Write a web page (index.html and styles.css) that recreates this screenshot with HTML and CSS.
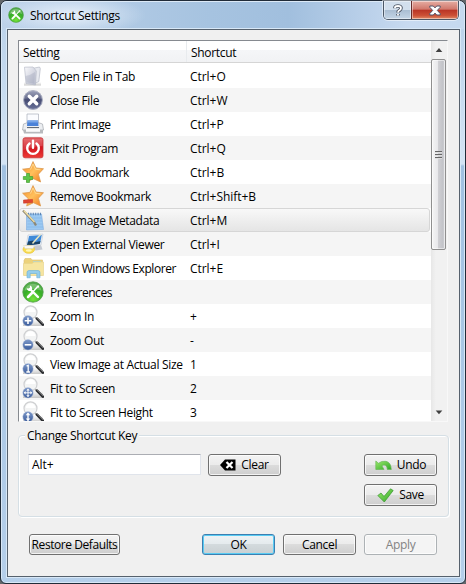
FILE: index.html
```
<!DOCTYPE html>
<html lang="en">
<head>
<meta charset="utf-8">
<title>Shortcut Settings</title>
<link rel="stylesheet" href="styles.css">
</head>
<body>
<svg class="defs" width="0" height="0" aria-hidden="true">
  <defs>
    <linearGradient id="gold" x1="0" y1="0" x2="1" y2="1"><stop offset="0" stop-color="#f58a2a"/><stop offset=".5" stop-color="#ffc05c"/><stop offset="1" stop-color="#f2761c"/></linearGradient>
    <linearGradient id="silver" x1="0" y1="0" x2="1" y2="1"><stop offset="0" stop-color="#fafafc"/><stop offset="1" stop-color="#b4b8ca"/></linearGradient>
    <linearGradient id="red" x1="0" y1="0" x2="0" y2="1"><stop offset="0" stop-color="#e25458"/><stop offset=".5" stop-color="#d31620"/><stop offset="1" stop-color="#ee3a35"/></linearGradient>
    <radialGradient id="green" cx=".5" cy=".85" r=".8"><stop offset="0" stop-color="#74e23a"/><stop offset=".6" stop-color="#37ae27"/><stop offset="1" stop-color="#54a84c"/></radialGradient>
    <linearGradient id="navy" x1="0" y1="0" x2="0" y2="1"><stop offset="0" stop-color="#8c92ae"/><stop offset=".5" stop-color="#474d74"/><stop offset="1" stop-color="#6a729a"/></linearGradient>
    <linearGradient id="blue" x1="0" y1="0" x2="0" y2="1"><stop offset="0" stop-color="#7d98c8"/><stop offset="1" stop-color="#3a5c9c"/></linearGradient>
    <linearGradient id="leaf" x1="0" y1="0" x2="1" y2="1"><stop offset="0" stop-color="#9bea6c"/><stop offset="1" stop-color="#2ea626"/></linearGradient>
    <linearGradient id="floor" x1="0" y1="0" x2="0" y2="1"><stop offset="0" stop-color="#ccc" stop-opacity="0"/><stop offset="1" stop-color="#b4b4b4" stop-opacity=".75"/></linearGradient>
    <symbol id="i-folder" viewBox="0 0 22 22">
      <path d="M2 17h17v3.500H2z" fill="url(#floor)"/>
      <path d="M10 3.500L17.500 2l.8 1.500-1.500 13-5.300 2.500z" fill="#e8eaf0" stroke="#b5b9c6" stroke-width=".7"/>
      <path d="M2.500 2.200L11 2l3.300 4-.8 14L4 18.500z" fill="url(#silver)" stroke="#b8bbc8" stroke-width=".7"/>
      <path d="M3.500 11Q9 10 13 7l-.8 11.500L4.500 17.500z" fill="#9ea3b8" opacity=".35"/>
    </symbol>
    <symbol id="i-close" viewBox="0 0 22 22">
      <circle cx="11" cy="11" r="9.400" fill="url(#navy)" stroke="#a9adc0" stroke-width="1"/>
      <path d="M2.500 10a8.500 8.500 0 0 1 17 0q-8-3-17 0z" fill="#fff" opacity=".14"/>
      <path d="M7.300 7.300l7.400 7.400m0-7.400l-7.400 7.400" stroke="#fff" stroke-width="3.400" stroke-linecap="round"/>
    </symbol>
    <symbol id="i-print" viewBox="0 0 22 22">
      <path d="M5 1h11.500v11H5z" fill="#fbfcff" stroke="#aaafba" stroke-width=".7"/>
      <path d="M1.500 11l3-1h13l3 1 1 6H.5z" fill="#eceef1" stroke="#a3a7af" stroke-width=".7"/>
      <path d="M5.500 7.500h10.500l.5 5.500H5z" fill="#4b82d8"/><path d="M5.500 7.500h10.500v2H5.500z" fill="#7aa7e8"/><path d="M5 14h12v1.200H5z" fill="#646c78"/>
      <path d="M1 17h20v3.500H2z" fill="#b8babd"/><path d="M4 15.500h14v3.300H4z" fill="#fafafa"/>
    </symbol>
    <symbol id="i-power" viewBox="0 0 22 22">
      <rect x="1" y=".8" width="20" height="20" rx="2" fill="url(#red)" stroke="#c63236" stroke-width=".8"/>
      <path d="M1.500 1.500h19V9Q12 9 1.500 13z" fill="#fff" opacity=".15"/>
      <path d="M7.500 6.500a5.800 5.800 0 1 0 7 0" fill="none" stroke="#fff" stroke-width="2.400" stroke-linecap="round"/>
      <path d="M11 3.800v7" stroke="#fff" stroke-width="2.400" stroke-linecap="round"/>
    </symbol>
    <symbol id="i-star" viewBox="0 0 22 22">
      <path d="M11 .6l3 6.400 7.500.7-5.100 5.500 2.200 7.800-7.100-3.300L4.700 21l1.500-7.500L.6 8.200 8 7.300z" fill="url(#gold)" stroke="#dc9a50" stroke-width=".8" stroke-linejoin="round"/>
      <path d="M8.500 8.500L11 3l2.500 5.200 5 .7" fill="none" stroke="#ffdc96" stroke-width=".9"/>
    </symbol>
    <symbol id="i-add" viewBox="0 0 22 22"><use href="#i-star"/><path d="M4.500 12.500h3v3h3.200v3H7.500v3h-3v-3H1.300v-3h3.200z" fill="#5cc648" stroke="#38982c" stroke-width=".6"/></symbol>
    <symbol id="i-remove" viewBox="0 0 22 22"><use href="#i-star"/><path d="M1.500 15l9-.6v3.200l-9 .6z" fill="#e04431" stroke="#bd3020" stroke-width=".5"/></symbol>
    <symbol id="i-edit" viewBox="0 0 22 22">
      <path d="M4.500 5h15l2 15.500-17 .5z" fill="#9cc9f2" stroke="#7eace0" stroke-width=".6"/>
      <path d="M5 9h14.500M5.500 12h14.500M5.500 15h15M5 18h16" stroke="#84b4e6" stroke-width=".7"/>
      <path d="M6 5h14" stroke="#5b84b4" stroke-width="2.400" stroke-dasharray="1 1.400"/>
      <path d="M1 1.500L12 13l2 3.500" stroke="#8c8878" stroke-width="2.300" fill="none"/><path d="M1.800 1.500L12.500 13" stroke="#f0dfa4" stroke-width="1.300"/>
    </symbol>
    <symbol id="i-viewer" viewBox="0 0 22 22">
      <path d="M6 2l15-1-2 11L4 14z" fill="#f0f3f7" stroke="#c4cbd5" stroke-width=".7"/>
      <path d="M7 3l12.800-1-1.800 8.800L5 12.500z" fill="#3f8ad8"/><path d="M6 8.500l5-1 3 1.500 4.500-1-.8 3L5 12.500z" fill="#1b4468"/>
      <path d="M18.500 1.500l-8 9" stroke="#e9e6c0" stroke-width="1.500"/>
      <path d="M11 13.500l8-1.500 1.500 4.500-7 1z" fill="#c5cad2"/>
      <ellipse cx="6.800" cy="16.300" rx="5.800" ry="4" fill="#f8dc50" stroke="#e6c440" stroke-width=".7"/><path d="M1.500 12.500h11l-1.500 3H3z" fill="#f7f7f5" stroke="#d4d2c4" stroke-width=".5"/><ellipse cx="6.800" cy="17.500" rx="3" ry="1.300" fill="#fff6b4"/>
    </symbol>
    <symbol id="i-explorer" viewBox="0 0 22 22">
      <path d="M2 3.500L3 1.500h6l1 1.500h10.500v15H2z" fill="#ecd27c" stroke="#dcc070" stroke-width=".6"/>
      <path d="M11 4h8v4h-8z" fill="#b5d7cf"/><path d="M1.500 6.500H10L12 5h9.500v13.500h-20z" fill="#f6e5a0" stroke="#e6d28a" stroke-width=".6"/>
      <path d="M5 20.800v-5.300q0-2 2-2h9q2 0 2 2v5.300h-3.200v-4.300H8.200v4.300z" fill="#94cdec" stroke="#64aeda" stroke-width=".6"/>
    </symbol>
    <symbol id="i-tools" viewBox="0 0 22 22">
      <circle cx="11" cy="11" r="10.200" fill="url(#green)" stroke="#4c9c45" stroke-width=".8"/>
      <path d="M2.500 9.500a8.700 8.700 0 0 1 17 0q-8.500-3-17 0z" fill="#fff" opacity=".25"/>
      <path d="M8 8l8 8" stroke="#fff" stroke-width="2.400" stroke-linecap="round"/>
      <path d="M4.700 7.200a3.200 3.200 0 0 0 4.600 2.500A3.200 3.200 0 0 0 8 4.500l-.2 2.700-1.300.4z" fill="#fff"/>
      <path d="M15.800 5.500L7 15" stroke="#fff" stroke-width="1.500"/><path d="M10 12l-4 4" stroke="#fff" stroke-width="2.500" stroke-linecap="round"/><path d="M14.500 5l2-.8.800.8-.8 2" fill="#fff"/>
    </symbol>
    <symbol id="i-lens" viewBox="0 0 22 22">
      <path d="M1 14h20v7H1z" fill="url(#floor)"/>
      <path d="M13 12l2 2" stroke="#999" stroke-width="1.600"/>
      <path d="M15 13.700l5.800 6" stroke="#2a2c2f" stroke-width="2.600" stroke-linecap="round"/><path d="M15 13l6 6" stroke="#999" stroke-width=".6"/>
      <circle cx="8.500" cy="7.300" r="6.500" fill="#f3f4f4" stroke="#cfd0d2" stroke-width="1.200"/>
      <path d="M3.800 7a4.800 4.800 0 0 1 9.600 0z" fill="#fff"/>
      <circle cx="6" cy="15.800" r="5.100" fill="url(#blue)" stroke="#8da3cc" stroke-width=".5"/>
    </symbol>
    <symbol id="i-in" viewBox="0 0 22 22"><use href="#i-lens"/><path d="M2.700 15.800h6.600M6 12.500v6.600" stroke="#fff" stroke-width="1.600"/></symbol>
    <symbol id="i-out" viewBox="0 0 22 22"><use href="#i-lens"/><path d="M2.700 15.800h6.600" stroke="#fff" stroke-width="1.600"/></symbol>
    <symbol id="i-actual" viewBox="0 0 22 22"><use href="#i-lens"/><path d="M4.500 13l1.700-.6v6.500M4.300 19h3.700" stroke="#fff" stroke-width="1.300" fill="none"/></symbol>
    <symbol id="i-fit" viewBox="0 0 22 22"><use href="#i-lens"/><path d="M3 15.800h6M6 12.800v6" stroke="#fff" stroke-width=".9"/><path d="M1.600 15.800l2-1.700v3.400zM10.400 15.800l-2-1.700v3.400zM6 11.400l-1.700 2h3.400zM6 20.200l-1.700-2h3.400z" fill="#fff"/></symbol>
    <symbol id="i-height" viewBox="0 0 22 22"><use href="#i-lens"/><path d="M6 12.500v7" stroke="#fff" stroke-width="1.400"/><path d="M6 11.400l-2.300 2.800h4.600zM6 20.200l-2.300-2.800h4.600z" fill="#fff"/></symbol>
  </defs>
</svg>

<div class="window">
  <header class="titlebar">
    <svg class="app-icon"><use href="#i-tools"/></svg>
    <h1 class="title">Shortcut Settings</h1>
    <div class="controls">
      <button class="control help" aria-label="Help"><svg width="10" height="13" viewBox="0 0 10 13"><path d="M2 4.200V3.500Q2.200 2 5 2T8 4Q8 5.500 6.500 6.300 5 7 5 8.500M5 10v1.600" fill="none" stroke="#4e5665" stroke-width="3.600"/><path d="M2 4.200V3.500Q2.200 2 5 2T8 4Q8 5.500 6.500 6.300 5 7 5 8.500M5 10v1.600" fill="none" stroke="#fff" stroke-width="1.800"/></svg></button>
      <button class="control exit" aria-label="Close"><svg width="12" height="11" viewBox="0 0 12 11"><path d="M.8 1h3.500L6 2.900 7.700 1h3.500v1.300L8.300 5.400l2.900 3.200V10H7.700L6 8.100 4.300 10H.8V8.600l2.900-3.200L.8 2.300z" fill="#fff" stroke="#535266" stroke-width="1"/></svg></button>
    </div>
  </header>
  <main class="client">
    <section class="list">
      <div class="table">
        <div class="head"><span class="setting">Setting</span><span class="key">Shortcut</span></div>
        <div class="row"><svg class="icon"><use href="#i-folder"/></svg><span class="name">Open File in Tab</span><span class="key">Ctrl+O</span></div>
        <div class="row"><svg class="icon"><use href="#i-close"/></svg><span class="name">Close File</span><span class="key">Ctrl+W</span></div>
        <div class="row"><svg class="icon"><use href="#i-print"/></svg><span class="name">Print Image</span><span class="key">Ctrl+P</span></div>
        <div class="row"><svg class="icon"><use href="#i-power"/></svg><span class="name">Exit Program</span><span class="key">Ctrl+Q</span></div>
        <div class="row"><svg class="icon"><use href="#i-add"/></svg><span class="name">Add Bookmark</span><span class="key">Ctrl+B</span></div>
        <div class="row"><svg class="icon"><use href="#i-remove"/></svg><span class="name">Remove Bookmark</span><span class="key">Ctrl+Shift+B</span></div>
        <div class="row selected"><svg class="icon"><use href="#i-edit"/></svg><span class="name">Edit Image Metadata</span><span class="key">Ctrl+M</span></div>
        <div class="row"><svg class="icon"><use href="#i-viewer"/></svg><span class="name">Open External Viewer</span><span class="key">Ctrl+I</span></div>
        <div class="row"><svg class="icon"><use href="#i-explorer"/></svg><span class="name tight">Open Windows Explorer</span><span class="key">Ctrl+E</span></div>
        <div class="row"><svg class="icon"><use href="#i-tools"/></svg><span class="name tight">Preferences</span><span class="key"></span></div>
        <div class="row"><svg class="icon"><use href="#i-in"/></svg><span class="name">Zoom In</span><span class="key">+</span></div>
        <div class="row"><svg class="icon"><use href="#i-out"/></svg><span class="name">Zoom Out</span><span class="key">-</span></div>
        <div class="row"><svg class="icon"><use href="#i-actual"/></svg><span class="name">View Image at Actual Size</span><span class="key">1</span></div>
        <div class="row"><svg class="icon"><use href="#i-fit"/></svg><span class="name">Fit to Screen</span><span class="key">2</span></div>
        <div class="row"><svg class="icon"><use href="#i-height"/></svg><span class="name">Fit to Screen Height</span><span class="key">3</span></div>
      </div>
      <div class="scrollbar">
        <svg class="arrow" viewBox="0 0 17 17"><path d="M5 10.500L8.500 6.500l3.500 4z" fill="#404040"/></svg>
        <div class="thumb"><i></i><i></i><i></i></div>
        <svg class="arrow last" viewBox="0 0 17 17"><path d="M5 7l3.500 4L12 7z" fill="#404040"/></svg>
      </div>
    </section>
    <section class="group">
      <h2 class="legend">Change Shortcut Key</h2>
      <div class="group-body">
        <div class="field">Alt+</div>
        <button class="btn"><svg width="16" height="12" viewBox="0 0 16 12"><path d="M0 6L5 .5h10.500v11H5z" fill="#000"/><path d="M6.500 3l6 6m0-6l-6 6" stroke="#fff" stroke-width="2.200"/></svg><span>Clear</span></button>
        <div class="side">
          <button class="btn"><svg width="17" height="11" viewBox="0 0 17 11"><path d="M.8 1l2.700 2.300Q6.500.6 11 1.300q5 1 5.300 8.200h-4Q12 5 9 5q-1.500 0-2 1L9 9.500H.8z" fill="url(#leaf)" stroke="#6ab85a" stroke-width=".7"/></svg><span>Undo</span></button>
          <button class="btn"><svg width="17" height="15" viewBox="0 0 17 15"><path d="M.8 7.500L4 5l3 3.500L13.500.8l2.700 1.700L7.300 14z" fill="url(#leaf)" stroke="#36952c" stroke-width=".7"/></svg><span>Save</span></button>
        </div>
      </div>
    </section>
    <footer class="footer">
      <button class="btn restore">Restore Defaults</button>
      <button class="btn default">OK</button>
      <button class="btn">Cancel</button>
      <button class="btn disabled" disabled>Apply</button>
    </footer>
  </main>
</div>
</body>
</html>
```
FILE: styles.css
```
* { box-sizing: border-box; }
body {
  margin: 0;
  width: 466px;
  height: 584px;
  overflow: hidden;
  background: #63676b;
  color: #000;
  font: 12px/16px "Open Sans", "Noto Sans", sans-serif;
  letter-spacing: -0.32px;
}
button { font: inherit; letter-spacing: inherit; color: inherit; margin: 0; padding: 0; }
.defs { position: absolute; }
.window {
  width: 466px;
  height: 584px;
  padding: 0 5px 5px 6px;
  border: 1px solid #202b38;
  border-radius: 7px 7px 6px 6px;
  background: linear-gradient(#b9d0e9 0, #c5daef 80px, #d4e4f4 163px, #a1c1e1 165px, #b5cfea 100%);
  box-shadow: inset 0 0 0 1px #d8e7f6;
}
.titlebar {
  display: flex;
  align-items: flex-start;
  height: 28px;
  margin: 0 -5px 0 -6px;
  padding: 0 6px 0 7px;
  border-radius: 6px 6px 0 0;
  background:
    radial-gradient(ellipse 75px 20px at 70px 14px, rgba(235, 243, 251, .9), rgba(225, 236, 248, 0)),
    linear-gradient(90deg, #bdd2ea, #a6c3e0 45%, #a1bfde 62%, #c8daf0 88%, #c5d9ef);
  box-shadow: inset 0 1px #dce9f6, inset 1px 0 #d8e7f6, inset -1px 0 #d8e7f6;
}
.app-icon { width: 16px; height: 16px; margin-top: 6px; }
.title { flex: 1; margin: 7px 0 0 6px; font-size: 12px; font-weight: 400; line-height: 16px; }
.controls {
  display: flex;
  height: 19px;
  border: 1px solid #4c5867;
  border-top: 0;
  border-radius: 0 0 5px 5px;
  overflow: hidden;
  box-shadow: 0 0 0 1px rgba(255, 255, 255, .5);
}
.control { display: flex; align-items: center; justify-content: center; border: 0; box-shadow: inset 0 0 0 1px rgba(255, 255, 255, .45); }
.help { width: 27px; background: linear-gradient(#d2dfed 0 48%, #a9bdd2 50%, #c4d5e6); }
.exit { width: 47px; border-left: 1px solid #672d2b; background: linear-gradient(#e6ada3 0, #d0776b 46%, #b93425 50%, #cc5036 80%, #e08b67); }
.client {
  height: 548px;
  padding: 10px 10px 0;
  border: 1px solid #56616d;
  background: #f0f0f0;
  box-shadow: 0 0 0 1px #d8e8f7;
}
.list {
  display: flex;
  width: 430px;
  height: 382px;
  border: 1px solid #f8f8f8;
  border-top-color: #868a90;
  border-left-color: #868a90;
  background: #fff;
  overflow: hidden;
}
.table { width: 412px; }
.head { display: flex; height: 22px; margin-bottom: 1px; border-bottom: 1px solid #d5d5d5; background: linear-gradient(#fff 0 9px, #f5f6f8 9px, #f1f2f4); line-height: 24px; }
.setting { width: 168px; padding-left: 4px; border-right: 1px solid #e8ebee; }
.head .key { padding-left: 4px; letter-spacing: -0.3px; }
.row { display: flex; align-items: center; height: 24px; padding-left: 3px; line-height: 18px; }
.row:nth-child(odd) { background: #f5f5f5; }
.row.selected { width: 411px; border: 1px solid #d6d6d6; border-radius: 3px; background: linear-gradient(#f8f8f8, #e5e5e5); padding-left: 2px; }
.icon { flex: none; width: 22px; height: 22px; }
.name { width: 134px; margin-left: 6px; padding-top: 2px; white-space: nowrap; }
.name.tight { letter-spacing: -0.44px; }
.row .key { padding: 2px 0 0 6px; letter-spacing: -0.05px; }
.scrollbar { display: flex; flex-direction: column; width: 16px; background: linear-gradient(90deg, #e7e7e7, #f1f1f1 30%, #f1f1f1); }
.arrow { width: 16px; height: 18px; }
.thumb {
  display: flex;
  flex-direction: column;
  align-items: center;
  justify-content: center;
  gap: 1px;
  height: 191px;
  width: 15px;
  border: 1px solid #8f8f8f;
  border-radius: 2px;
  background: linear-gradient(90deg, #f5f5f5, #e8e8eb 45%, #cfcfd3 50%, #c2c3c8 85%, #dcdcdf);
  box-shadow: inset 0 0 0 1px rgba(255, 255, 255, .5);
}
.thumb i { width: 7px; height: 2px; background: linear-gradient(#666 50%, #ddd 50%); }
.last { margin-top: auto; }
.group { height: 82px; margin-top: 13px; border: 1px solid #d5dfe5; border-radius: 4px; box-shadow: inset 1px 1px #fff, 1px 1px #fff; }
.legend { width: max-content; margin: -8px 0 0 6px; padding: 0 2px; background: #f0f0f0; font-size: 12px; font-weight: 400; line-height: 16px; }
.group-body { display: flex; align-items: flex-start; padding: 10px 11px 0 9px; }
.field { width: 173px; height: 21px; margin-right: 7px; padding-left: 3px; border: 1px solid #e0e4eb; border-top-color: #abadb3; border-radius: 1px; background: #fff; line-height: 20px; letter-spacing: -0.05px; }
.side { display: flex; flex-direction: column; gap: 8px; margin-left: auto; }
.btn {
  display: flex;
  align-items: center;
  justify-content: center;
  gap: 5px;
  width: 73px;
  height: 22px;
  border: 1px solid #707070;
  border-radius: 3px;
  background: linear-gradient(#f3f3f3, #ebebeb 49%, #dcdcdc 50%, #cecece);
  box-shadow: inset 0 0 0 1px rgba(255, 255, 255, .75);
  white-space: nowrap;
}
.footer { display: flex; gap: 8px; margin-top: 17px; padding-left: 11px; }
.footer .btn { height: 21px; }
.footer .restore { width: 91px; margin-right: 74px; letter-spacing: -0.43px; }
.btn.default { border-color: #3c7fb1; box-shadow: inset 0 0 0 1px #58cbf3; background: linear-gradient(#eef3f5, #e4eaed 49%, #d3dadd 50%, #c9d0d3); }
.btn.disabled { border-color: #adb2b5; background: #f4f4f4; color: #838383; }
```
